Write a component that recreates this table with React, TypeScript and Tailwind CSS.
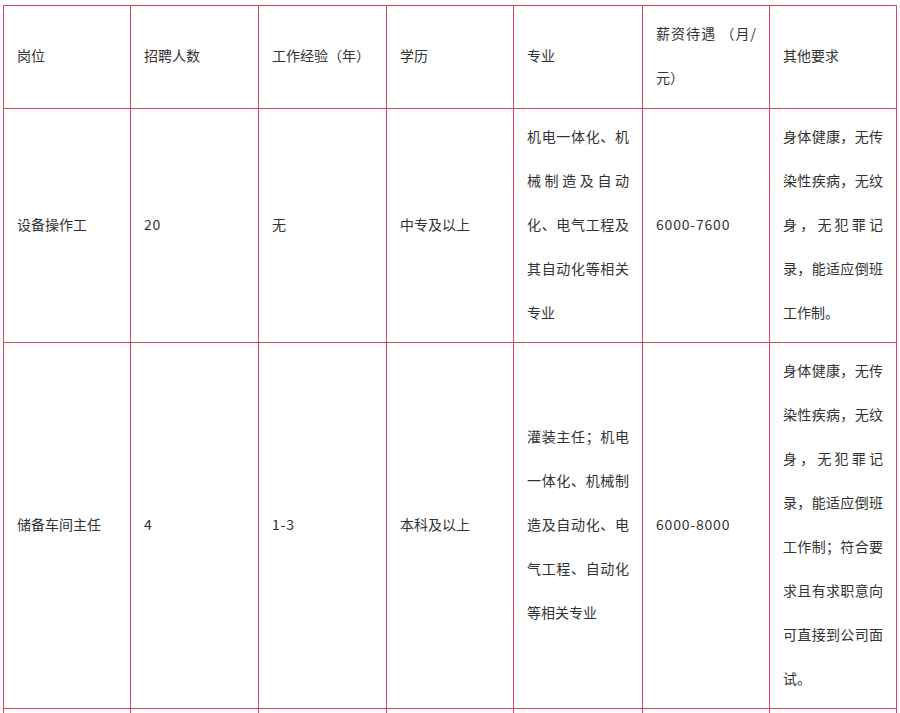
const rows = [
  {
    h: "h-[103px]",
    cells: ["岗位", "招聘人数", "工作经验（年）", "学历", "专业", "薪资待遇 （月/元）", "其他要求"],
  },
  {
    h: "h-[234px]",
    cells: [
      "设备操作工",
      "20",
      "无",
      "中专及以上",
      "机电一体化、机械制造及自动化、电气工程及其自动化等相关专业",
      "6000-7600",
      "身体健康，无传染性疾病，无纹身，无犯罪记录，能适应倒班工作制。",
    ],
  },
  {
    h: "h-[366px]",
    cells: [
      "储备车间主任",
      "4",
      "1-3",
      "本科及以上",
      "灌装主任；机电一体化、机械制造及自动化、电气工程、自动化等相关专业",
      "6000-8000",
      "身体健康，无传染性疾病，无纹身，无犯罪记录，能适应倒班工作制；符合要求且有求职意向可直接到公司面试。",
    ],
  },
  {
    h: "h-[60px]",
    cells: ["", "", "", "", "", "", ""],
  },
];

const widths = ["w-[127px]", "w-[128px]", "w-[128px]", "w-[127px]", "w-[129px]", "w-[127px]", "w-[127px]"];

export default function App() {
  return (
    <div
      className="min-h-[713px] bg-white pt-[5px] pl-[3px] text-[14px] text-[#333]"
      style={{ fontFamily: '"Noto Sans CJK SC", "Noto Sans", sans-serif' }}
    >
      <table className="table-fixed border-collapse w-[894px]">
        <colgroup>
          {widths.map((w, i) => (
            <col key={i} className={w} />
          ))}
        </colgroup>
        <tbody>
          {rows.map((r, ri) => (
            <tr key={ri} className={r.h}>
              {r.cells.map((c, ci) => (
                <td
                  key={ci}
                  className={
                    "border border-[#d9455a] px-[13px] pt-[4px] pb-[8px] align-middle text-justify leading-[44px] " +
                    (/^[0-9-]+$/.test(c) ? "tracking-[0.8px]" : "")
                  }
                >
                  {c}
                </td>
              ))}
            </tr>
          ))}
        </tbody>
      </table>
    </div>
  );
}
